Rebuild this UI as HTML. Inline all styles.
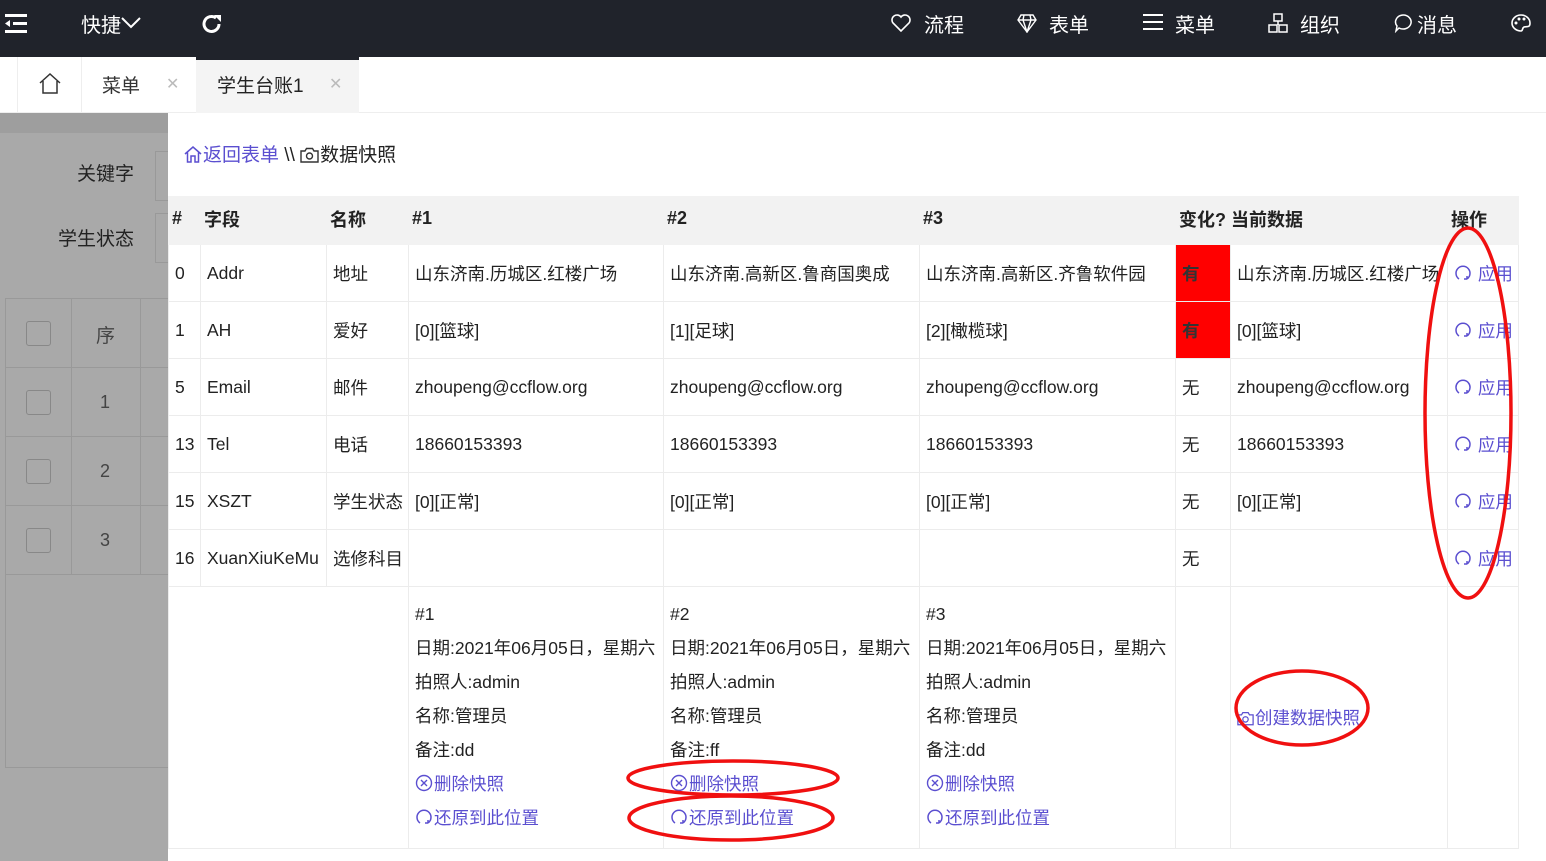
<!DOCTYPE html>
<html><head><meta charset="utf-8"><style>
*{margin:0;padding:0;box-sizing:border-box}
body{width:1546px;height:861px;overflow:hidden;background:#fff;font-family:"Liberation Sans","Noto Sans CJK SC",sans-serif;color:#222;position:relative}
.top{position:absolute;left:0;top:0;width:1546px;height:57px;background:#20232b;color:#fff;font-size:20px}
.top span{position:absolute;top:9px}
.tabs{position:absolute;top:57px;left:0;width:1546px;height:56px;background:#fff;border-bottom:1px solid #eee;font-size:19px}
.left{position:absolute;left:0;top:113px;width:168px;height:748px;background:#a9a9a9}
.dlg{position:absolute;left:168px;top:113px;width:1378px;height:748px;background:#fff}
table{position:absolute;left:168px;top:196px;width:1350px;border-collapse:collapse;font-size:17.5px;table-layout:fixed}
td,th{border:1px solid #ececec;padding:0 6px;text-align:left;white-space:nowrap;overflow:hidden}
th{background:#f2f2f2;height:48px;font-weight:bold;font-size:18px;border-color:#f2f2f2;padding:0 3px 4px}
tbody td{height:57px}
.red{background:#ff0000;font-weight:bold;color:#333}
.lk{color:#5b4fd0}
.ft td{vertical-align:top;line-height:34px;padding-top:10px;height:262px}
.ic{display:inline-block;vertical-align:-2px;margin-right:1px}
</style></head><body>
<div class="top">
<svg style="position:absolute;left:5px;top:14px" width="22" height="20" viewBox="0 0 22 20" fill="#fff"><rect x="0" y="0" width="22" height="3"/><rect x="8" y="8" width="14" height="3"/><rect x="0" y="16" width="22" height="3"/><path d="M0 9.5 L5 6 L5 13Z"/></svg>
<span style="left:81px">快捷</span>
<svg style="position:absolute;left:121px;top:17px" width="20" height="12" viewBox="0 0 20 12"><path d="M1 1 L10 10 L19 1" stroke="#fff" stroke-width="2" fill="none"/></svg>
<svg style="position:absolute;left:201px;top:13px" width="22" height="22" viewBox="0 0 22 22"><path d="M18 11 A7.5 7.5 0 1 1 15 5" stroke="#fff" stroke-width="3" fill="none"/><path d="M13 2 L20 2 L20 9Z" fill="#fff"/></svg>
<svg style="position:absolute;left:891px;top:14px" width="20" height="18" viewBox="0 0 20 18"><path d="M10 17 L2 9 A4.5 4.5 0 0 1 10 3 A4.5 4.5 0 0 1 18 9Z" stroke="#fff" stroke-width="1.6" fill="none"/></svg>
<span style="left:924px">流程</span>
<svg style="position:absolute;left:1017px;top:13px" width="20" height="20" viewBox="0 0 20 20"><path d="M4 2 H16 L19 7 L10 19 L1 7Z M1 7 H19 M7 2 L6 7 L10 19 L14 7 L13 2" stroke="#fff" stroke-width="1.4" fill="none"/></svg>
<span style="left:1049px">表单</span>
<svg style="position:absolute;left:1143px;top:14px" width="20" height="16" viewBox="0 0 20 16" fill="#fff"><rect y="0" width="20" height="2"/><rect y="7" width="20" height="2"/><rect y="14" width="20" height="2"/></svg>
<span style="left:1175px">菜单</span>
<svg style="position:absolute;left:1268px;top:13px" width="20" height="20" viewBox="0 0 20 20"><path d="M6 1h8v7H6zM1 12h8v7H1zM11 12h8v7h-8zM10 8v4" stroke="#fff" stroke-width="1.5" fill="none"/></svg>
<span style="left:1300px">组织</span>
<svg style="position:absolute;left:1393px;top:13px" width="20" height="20" viewBox="0 0 20 20"><path d="M10 2 A8 7 0 1 1 6 15 L3 18 L4 13 A8 7 0 0 1 10 2Z" stroke="#fff" stroke-width="1.5" fill="none"/></svg>
<span style="left:1417px">消息</span>
<svg style="position:absolute;left:1510px;top:13px" width="22" height="20" viewBox="0 0 22 20"><path d="M11 2 A9 8 0 1 0 11 18 C13 18 12 15 14 14 C17 13 20 15 20 10 A9 8 0 0 0 11 2Z" stroke="#fff" stroke-width="1.6" fill="none"/><circle cx="6" cy="10" r="1.5" fill="#fff"/><circle cx="9" cy="6" r="1.5" fill="#fff"/><circle cx="14" cy="6" r="1.5" fill="#fff"/></svg>
</div>
<div class="tabs">
<div style="position:absolute;left:17px;top:0;width:1px;height:56px;background:#eee"></div>
<svg style="position:absolute;left:38px;top:15px" width="24" height="22" viewBox="0 0 24 22"><path d="M2 11 L12 2 L22 11 M5 9 V21 H19 V9" stroke="#333" stroke-width="1.5" fill="none"/></svg>
<div style="position:absolute;left:81px;top:0;width:1px;height:56px;background:#eee"></div>
<span style="position:absolute;left:102px;top:14px;color:#333">菜单</span>
<span style="position:absolute;left:166px;top:17px;color:#bbb;font-size:16px">✕</span>
<div style="position:absolute;left:196px;top:0;width:163px;height:56px;background:#f4f4f4;border-top:3px solid #20232b"></div>
<span style="position:absolute;left:217px;top:14px;color:#222">学生台账1</span>
<span style="position:absolute;left:329px;top:17px;color:#bbb;font-size:16px">✕</span>
</div>
<div class="left">
<div style="height:20px;background:#9e9e9e"></div>
<span style="position:absolute;left:77px;top:46px;font-size:19px;color:#222">关键字</span>
<span style="position:absolute;left:58px;top:111px;font-size:19px;color:#222">学生状态</span>
<div style="position:absolute;left:155px;top:38px;width:13px;height:50px;border:1px solid #999;border-right:0"></div>
<div style="position:absolute;left:155px;top:100px;width:13px;height:50px;border:1px solid #999;border-right:0"></div>
<div style="position:absolute;left:5px;top:185px;width:163px;height:470px;border:1px solid #999;border-right:0"></div>
<div style="position:absolute;left:5px;top:254px;width:163px;height:1px;background:#999"></div>
<div style="position:absolute;left:5px;top:323px;width:163px;height:1px;background:#999"></div>
<div style="position:absolute;left:5px;top:392px;width:163px;height:1px;background:#999"></div>
<div style="position:absolute;left:5px;top:461px;width:163px;height:1px;background:#999"></div>
<div style="position:absolute;left:71px;top:185px;width:1px;height:276px;background:#999"></div>
<div style="position:absolute;left:140px;top:185px;width:1px;height:276px;background:#999"></div>
<div style="position:absolute;left:26px;top:208px;width:25px;height:25px;border:1px solid #888;border-radius:3px"></div>
<div style="position:absolute;left:26px;top:277px;width:25px;height:25px;border:1px solid #888;border-radius:3px"></div>
<div style="position:absolute;left:26px;top:346px;width:25px;height:25px;border:1px solid #888;border-radius:3px"></div>
<div style="position:absolute;left:26px;top:415px;width:25px;height:25px;border:1px solid #888;border-radius:3px"></div>
<span style="position:absolute;left:96px;top:208px;font-size:19px;color:#444">序</span>
<span style="position:absolute;left:100px;top:279px;font-size:18px;color:#444">1</span>
<span style="position:absolute;left:100px;top:348px;font-size:18px;color:#444">2</span>
<span style="position:absolute;left:100px;top:417px;font-size:18px;color:#444">3</span>
</div>
<div class="dlg"></div>
<div style="position:absolute;left:184px;top:140px;font-size:19px"><span class="lk"><svg class="ic" width="18" height="18" viewBox="0 0 18 18"><path d="M1 9 L9 2 L17 9 M3.5 7.5 V17 H7 V11 H11 V17 H14.5 V7.5" stroke="#5b4fd0" stroke-width="1.5" fill="none"/></svg>返回表单</span> \\ <svg class="ic" width="19" height="16" viewBox="0 0 19 16"><path d="M1 4 H5 L6.5 1.5 H12.5 L14 4 H18 V15 H1Z" stroke="#333" stroke-width="1.4" fill="none"/><circle cx="9.5" cy="9" r="3" stroke="#333" stroke-width="1.4" fill="none"/></svg>数据快照</div>
<svg width="0" height="0" style="position:absolute"><defs><symbol id="rf" viewBox="0 0 18 18"><path d="M5 15 A7 7 0 1 1 13 15" stroke="#5b4fd0" stroke-width="1.5" fill="none"/><path d="M13 15 L10 15 M13 15 L13 12" stroke="#5b4fd0" stroke-width="1.5" fill="none"/></symbol><symbol id="xx" viewBox="0 0 18 18"><circle cx="9" cy="9" r="7.5" stroke="#5b4fd0" stroke-width="1.4" fill="none"/><path d="M6 6 L12 12 M12 6 L6 12" stroke="#5b4fd0" stroke-width="1.4"/></symbol><symbol id="cam" viewBox="0 0 19 16"><path d="M1 4 H5 L6.5 1.5 H12.5 L14 4 H18 V15 H1Z" stroke="#5b4fd0" stroke-width="1.4" fill="none"/><circle cx="9.5" cy="9" r="3" stroke="#5b4fd0" stroke-width="1.4" fill="none"/></symbol></defs></svg>
<table>
<colgroup><col style="width:32px"><col style="width:126px"><col style="width:82px"><col style="width:255px"><col style="width:256px"><col style="width:256px"><col style="width:55px"><col style="width:217px"><col style="width:71px"></colgroup>
<thead><tr><th>#</th><th>字段</th><th>名称</th><th>#1</th><th>#2</th><th>#3</th><th colspan="2">变化? 当前数据</th><th>操作</th></tr></thead>
<tbody>
<tr><td>0</td><td>Addr</td><td>地址</td><td>山东济南.历城区.红楼广场</td><td>山东济南.高新区.鲁商国奥成</td><td>山东济南.高新区.齐鲁软件园</td><td class="red">有</td><td>山东济南.历城区.红楼广场</td><td class="lk"><svg class="ic" width="18" height="18"><use href="#rf"/></svg> 应用</td></tr>
<tr><td>1</td><td>AH</td><td>爱好</td><td>[0][篮球]</td><td>[1][足球]</td><td>[2][橄榄球]</td><td class="red">有</td><td>[0][篮球]</td><td class="lk"><svg class="ic" width="18" height="18"><use href="#rf"/></svg> 应用</td></tr>
<tr><td>5</td><td>Email</td><td>邮件</td><td>zhoupeng@ccflow.org</td><td>zhoupeng@ccflow.org</td><td>zhoupeng@ccflow.org</td><td>无</td><td>zhoupeng@ccflow.org</td><td class="lk"><svg class="ic" width="18" height="18"><use href="#rf"/></svg> 应用</td></tr>
<tr><td>13</td><td>Tel</td><td>电话</td><td>18660153393</td><td>18660153393</td><td>18660153393</td><td>无</td><td>18660153393</td><td class="lk"><svg class="ic" width="18" height="18"><use href="#rf"/></svg> 应用</td></tr>
<tr><td>15</td><td>XSZT</td><td>学生状态</td><td>[0][正常]</td><td>[0][正常]</td><td>[0][正常]</td><td>无</td><td>[0][正常]</td><td class="lk"><svg class="ic" width="18" height="18"><use href="#rf"/></svg> 应用</td></tr>
<tr><td>16</td><td>XuanXiuKeMu</td><td>选修科目</td><td></td><td></td><td></td><td>无</td><td></td><td class="lk"><svg class="ic" width="18" height="18"><use href="#rf"/></svg> 应用</td></tr>
<tr class="ft"><td colspan="3"></td>
<td>#1<br>日期:2021年06月05日，星期六<br>拍照人:admin<br>名称:管理员<br>备注:dd<br><span class="lk"><svg class="ic" width="18" height="18"><use href="#xx"/></svg>删除快照</span><br><span class="lk"><svg class="ic" width="18" height="18"><use href="#rf"/></svg>还原到此位置</span></td>
<td>#2<br>日期:2021年06月05日，星期六<br>拍照人:admin<br>名称:管理员<br>备注:ff<br><span class="lk"><svg class="ic" width="18" height="18"><use href="#xx"/></svg>删除快照</span><br><span class="lk"><svg class="ic" width="18" height="18"><use href="#rf"/></svg>还原到此位置</span></td>
<td>#3<br>日期:2021年06月05日，星期六<br>拍照人:admin<br>名称:管理员<br>备注:dd<br><span class="lk"><svg class="ic" width="18" height="18"><use href="#xx"/></svg>删除快照</span><br><span class="lk"><svg class="ic" width="18" height="18"><use href="#rf"/></svg>还原到此位置</span></td>
<td></td><td style="vertical-align:middle;padding-top:0"><span class="lk"><svg class="ic" width="17" height="15"><use href="#cam"/></svg>创建数据快照</span></td><td></td></tr>
</tbody></table>
<svg style="position:absolute;left:0;top:0" width="1546" height="861"><g stroke="#f01010" stroke-width="3.5" fill="none">
<ellipse cx="1468" cy="413" rx="43" ry="185"/>
<ellipse cx="733" cy="778" rx="105" ry="17"/>
<ellipse cx="731" cy="818" rx="102" ry="22"/>
<ellipse cx="1302" cy="708" rx="66" ry="37"/>
</g></svg>
</body></html>
